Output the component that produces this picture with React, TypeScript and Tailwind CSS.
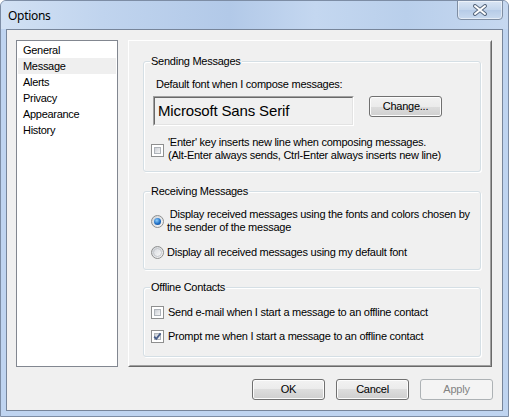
import React from "react";

const ui = { fontFamily: '"Liberation Sans", Arial, sans-serif' };
const T = "text-[11px] leading-[13px] tracking-[-0.25px] text-black";

function CheckBox({ checked }: { checked?: boolean }) {
  return (
    <div className="relative w-[13px] h-[13px] shrink-0 border border-[#8e8f8f] bg-white p-[2px]">
      <div className="w-full h-full border border-[#aeb3b9] bg-[linear-gradient(135deg,#cbcfd5,#f6f6f6)]" />
      {checked && (
        <svg className="absolute left-0 top-0" width="11" height="11" viewBox="0 0 11 11">
          <path d="M2.2 5.6 L4.3 7.9 L8.6 2.4" fill="none" stroke="#4a5f8a" strokeWidth="1.8" />
        </svg>
      )}
    </div>
  );
}

function Radio({ selected }: { selected?: boolean }) {
  return (
    <div className="w-[13px] h-[13px] shrink-0 rounded-full border border-[#8e8f8f] bg-[linear-gradient(135deg,#cfd3d8,#f7f7f7)] flex items-center justify-center">
      {selected ? (
        <div className="w-[7px] h-[7px] rounded-full bg-[radial-gradient(circle_at_40%_35%,#8fd0ff,#1f6ec4_55%,#0d3f86)]" />
      ) : (
        <div className="w-[9px] h-[9px] rounded-full border border-[#c4c7cc] bg-[linear-gradient(135deg,#d8dbe0,#f8f8f8)]" />
      )}
    </div>
  );
}

function Btn({ label, disabled }: { label: string; disabled?: boolean }) {
  return (
    <div
      className={
        "w-[73px] h-[21px] rounded-[3px] border flex items-center justify-center text-[11px] leading-[13px] tracking-[-0.25px] " +
        (disabled
          ? "border-[#adb2b5] bg-[#f4f4f4] text-[#838383]"
          : "border-[#707070] bg-[linear-gradient(#f2f2f2_0%,#ebebeb_50%,#dddddd_50%,#cfcfcf_100%)] shadow-[inset_0_0_0_1px_#fcfcfc] text-black")
      }
    >
      {label}
    </div>
  );
}

function Group({ title, className, children }: { title: string; className?: string; children: React.ReactNode }) {
  return (
    <div className={"relative border border-[#d5dfe5] rounded-[3px] shadow-[inset_1px_1px_0_#fff,1px_1px_0_#fff] " + (className || "")}>
      <span className={"absolute left-[6px] top-[-7px] px-[1px] bg-[#f0f0f0] " + T}>{title}</span>
      {children}
    </div>
  );
}

export default function App() {
  const items = ["General", "Message", "Alerts", "Privacy", "Appearance", "History"];
  return (
    <div
      className="relative w-[509px] h-[417px] overflow-hidden rounded-t-[6px] border border-[#7d8da5] bg-[#bfd4f0] flex flex-col"
      style={ui}
    >
      {/* Title bar */}
      <div className="h-[28px] shrink-0 bg-[linear-gradient(90deg,#d2e1f4_0%,#c0d4ee_20%,#b2c9e8_45%,#c4d7f0_62%,#b9cfeb_80%,#c6d8f0_100%)] flex items-center pl-[7px]">
        <span
          className="text-[12px] tracking-[-0.3px] text-black pt-[1px]"
          style={{ fontFamily: '"Noto Sans", "Open Sans", sans-serif' }}
        >
          Options
        </span>
      </div>
      <div className="absolute top-[-1px] right-[5px] w-[46px] h-[20px] rounded-b-[4px] border border-[#7f8ea3] bg-[linear-gradient(#d9e5f4,#c3d5ec_50%,#b6cbe7_50%,#c9daef)] shadow-[inset_0_0_0_1px_rgba(255,255,255,0.5)] flex items-center justify-center">
        <svg width="16" height="12" viewBox="0 0 16 12">
          <path d="M3 2 L13 10 M13 2 L3 10" stroke="#5a6a80" strokeWidth="4" strokeLinecap="round" />
          <path d="M3 2 L13 10 M13 2 L3 10" stroke="#ffffff" strokeWidth="2" strokeLinecap="round" />
        </svg>
      </div>

      {/* Client area */}
      <div className="ml-[5px] w-[497px] h-[382px] border border-[#77859a] bg-[#f0f0f0] pl-[9px] pt-[10px] flex flex-col">
        <div className="flex gap-[10px]">
          {/* Sidebar list */}
          <div className="w-[102px] h-[327px] border border-[#828790] bg-white pt-[1px] px-[1px]">
            {items.map((it) => (
              <div
                key={it}
                className={
                  "h-[16px] pl-[5px] flex items-center text-[11px] tracking-[-0.3px] text-black " +
                  (it === "Message" ? "bg-[#efefef]" : "")
                }
              >
                {it}
              </div>
            ))}
          </div>

          {/* Panel */}
          <div className="w-[364px] h-[327px] border border-t-white border-l-white border-r-[#696969] border-b-[#696969]">
            <div className="w-full h-full border border-t-[#f0f0f0] border-l-[#f0f0f0] border-r-[#a0a0a0] border-b-[#a0a0a0] pl-[13px] pr-[9px] pt-[19px] flex flex-col">
              <Group title="Sending Messages" className="pt-[16px] pb-[9px]">
                <div className={"pl-[12px] " + T}>Default font when I compose messages:</div>
                <div className="mt-[5px] flex items-start">
                  <div className="ml-[9px] w-[201px] h-[30px] border border-t-[#a0a0a0] border-l-[#a0a0a0] border-r-white border-b-white">
                    <div className="w-full h-full border border-t-[#696969] border-l-[#696969] border-r-[#e3e3e3] border-b-[#e3e3e3] flex items-center pl-[3px] text-[15px] tracking-[-0.15px] text-black">
                      Microsoft Sans Serif
                    </div>
                  </div>
                  <div className="ml-[15px]">
                    <Btn label="Change..." />
                  </div>
                </div>
                <div className="mt-[10px] pl-[7px] flex items-start gap-[4px]">
                  <div className="mt-[8px]">
                    <CheckBox />
                  </div>
                  <div className={T}>
                    <div>'Enter' key inserts new line when composing messages.</div>
                    <div>(Alt-Enter always sends, Ctrl-Enter always inserts new line)</div>
                  </div>
                </div>
              </Group>

              <Group title="Receiving Messages" className="mt-[19px] pt-[16px] pb-[10px]">
                <div className="pl-[7px] flex items-center gap-[3px]">
                  <Radio selected />
                  <div className={T + " whitespace-nowrap"}>
                    <div>&nbsp;Display received messages using the fonts and colors chosen by</div>
                    <div>the sender of the message</div>
                  </div>
                </div>
                <div className="mt-[12px] pl-[7px] flex items-center gap-[3px]">
                  <Radio />
                  <div className={T}>Display all received messages using my default font</div>
                </div>
              </Group>

              <Group title="Offline Contacts" className="mt-[17px] pt-[18px] pb-[13px]">
                <div className="pl-[7px] flex items-center gap-[4px]">
                  <CheckBox />
                  <div className={T}>Send e-mail when I start a message to an offline contact</div>
                </div>
                <div className="mt-[11px] pl-[7px] flex items-center gap-[4px]">
                  <CheckBox checked />
                  <div className={T}>Prompt me when I start a message to an offline contact</div>
                </div>
              </Group>
            </div>
          </div>
        </div>

        {/* Buttons */}
        <div className="mt-[12px] flex justify-end gap-[11px] pr-[9px]">
          <Btn label="OK" />
          <Btn label="Cancel" />
          <Btn label="Apply" disabled />
        </div>
      </div>
    </div>
  );
}
